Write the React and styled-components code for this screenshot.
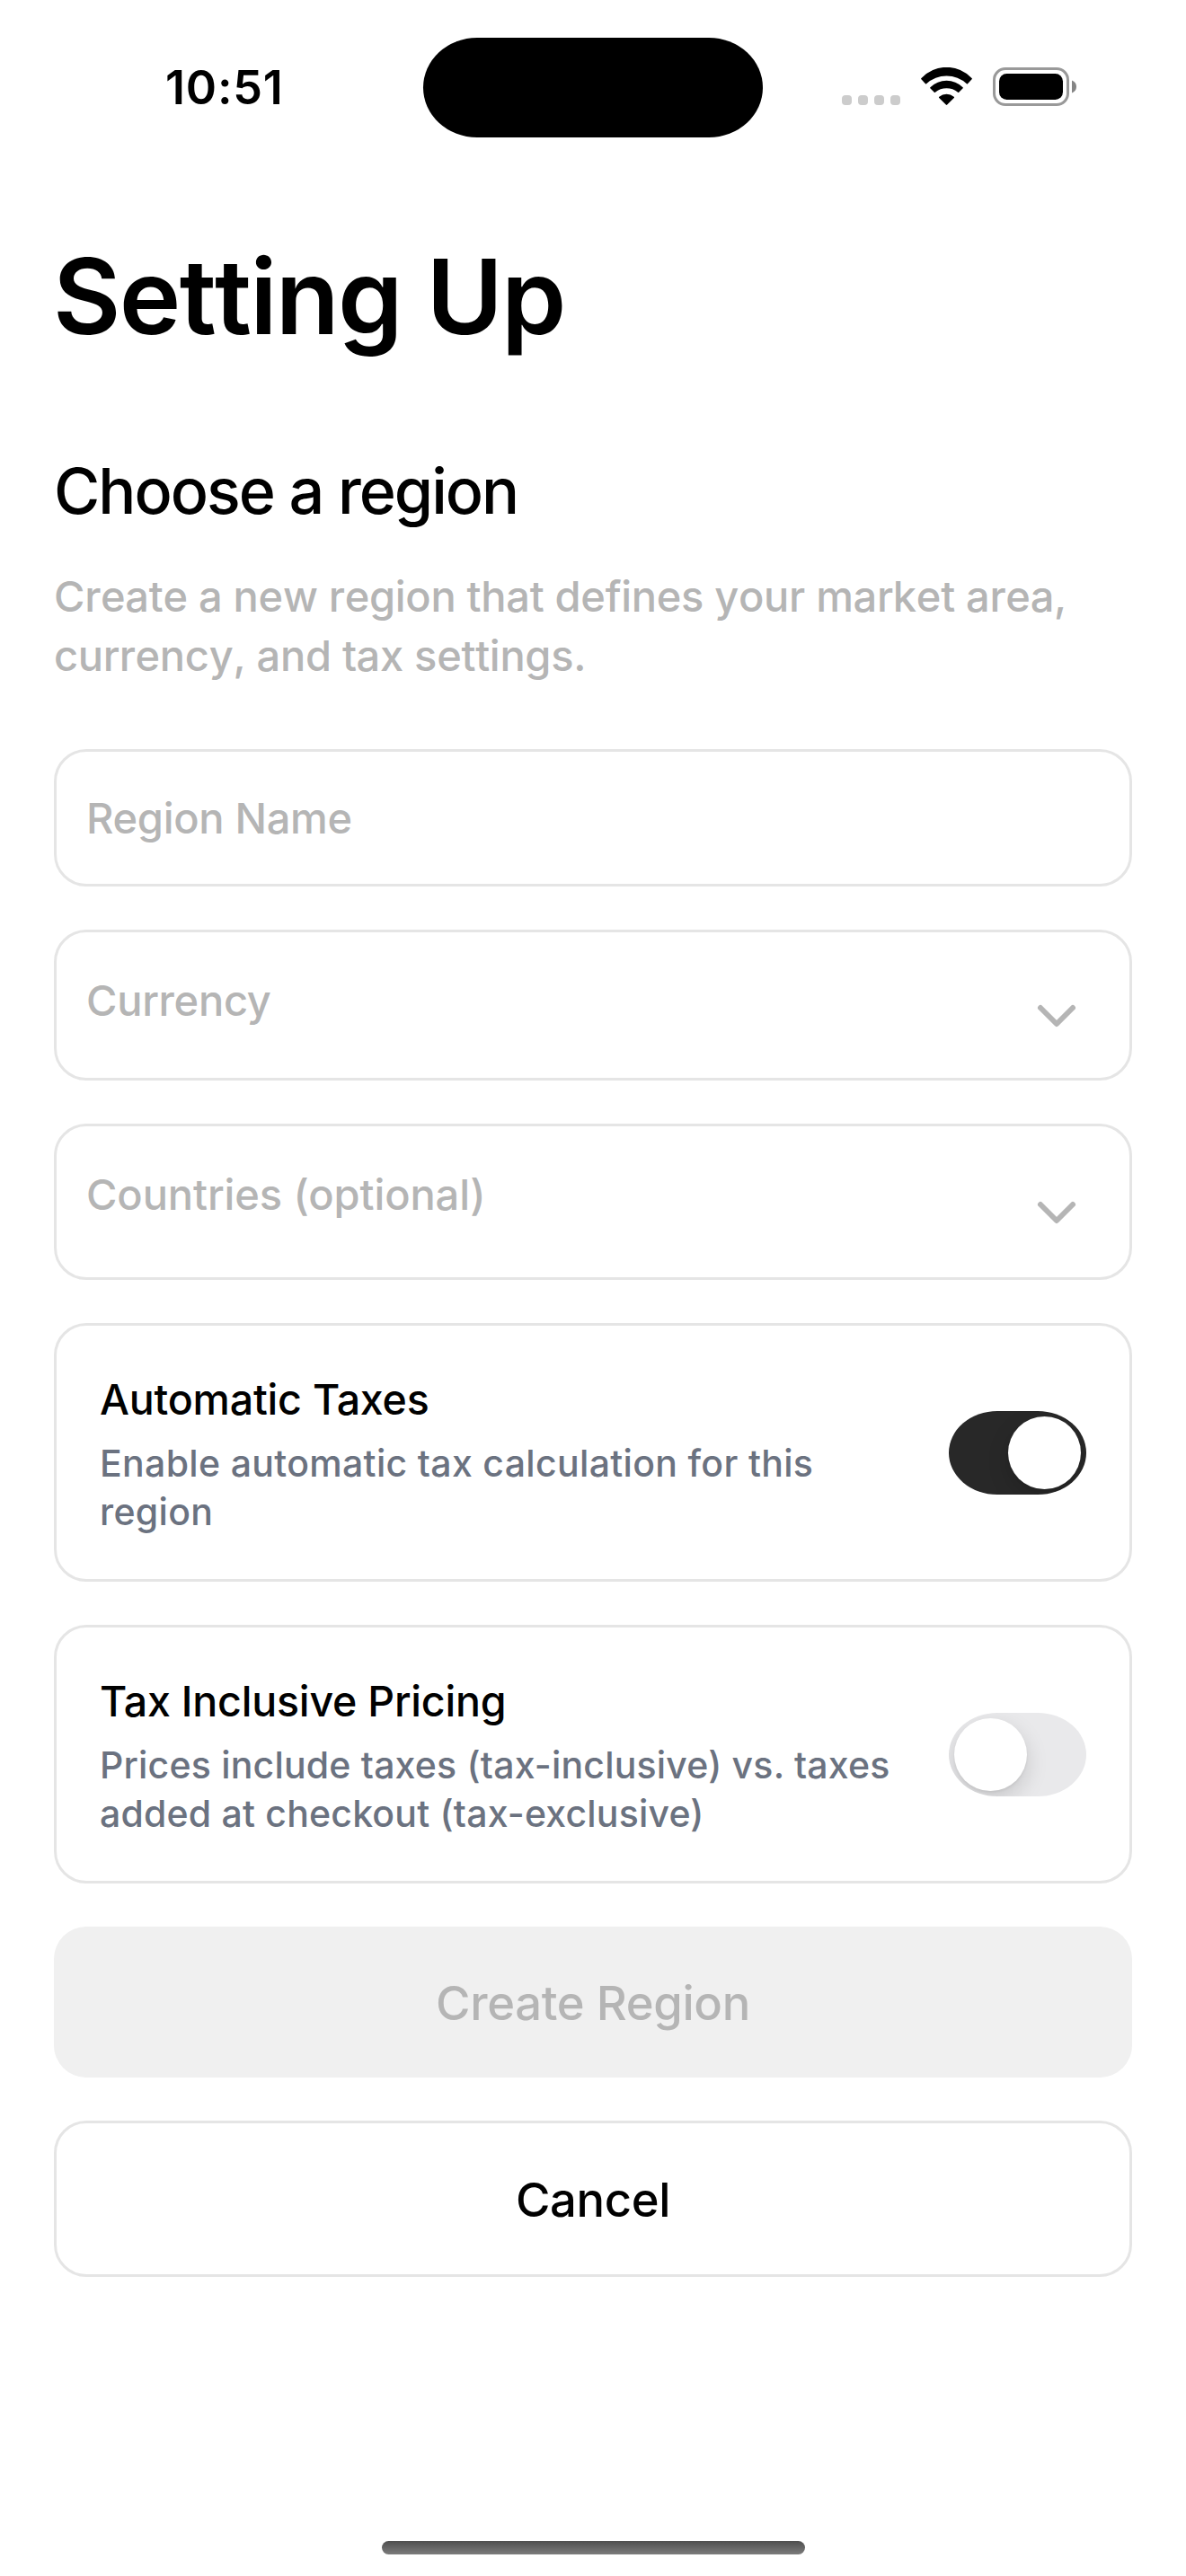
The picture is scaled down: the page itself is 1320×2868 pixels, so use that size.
import React, { useState } from "react";
import styled, { createGlobalStyle } from "styled-components";
import { ChevronDown } from "lucide-react";

const GlobalStyle = createGlobalStyle`
  *, *::before, *::after { box-sizing: border-box; }
  body {
    margin: 0;
    background: #fff;
    font-family: Inter, "Liberation Sans", sans-serif;
    font-weight: 500;
    color: #000;
  }
  h1, h2, p { margin: 0; }
`;

const muted = "#b5b5b5";
const line = "#e5e5e5";

const Screen = styled.div`
  width: 1320px;
  height: 2868px;
  display: flex;
  flex-direction: column;
  background: #fff;
  overflow: hidden;
`;

const StatusBar = styled.header`
  display: grid;
  grid-template-columns: 471px 378px 1fr;
  align-items: center;
  height: 194px;
  flex: none;
`;

const Clock = styled.time`
  padding-left: 184px;
  padding-top: 2px;
  font-size: 52px;
  line-height: 64px;
  font-weight: 600;
  letter-spacing: 0.8px;
`;

const Island = styled.div`
  height: 111px;
  border-radius: 60px / 55.5px;
  background: #000;
`;

const StatusIcons = styled.div`
  display: flex;
  align-items: flex-start;
  gap: 23px;
  padding-left: 88px;
  margin-bottom: 1px;
`;

const SignalDots = styled.div`
  display: flex;
  gap: 7px;
  margin-top: 31px;
`;

const Dot = styled.span`
  width: 11px;
  height: 11px;
  border-radius: 4px;
  background: #ccc;
`;

const Content = styled.main`
  display: flex;
  flex-direction: column;
  flex: 1;
  padding: 66px 60px 0;
`;

const Title = styled.h1`
  margin-left: -1px;
  font-size: 116px;
  line-height: 140px;
  font-weight: 600;
  font-kerning: none;
  letter-spacing: -1.7px;
`;

const Heading = styled.h2`
  margin-top: 105px;
  font-size: 70px;
  line-height: 84px;
  font-weight: 500;
  letter-spacing: -2px;
`;

const Lead = styled.p`
  margin-top: 42px;
  font-size: 47px;
  line-height: 66px;
  font-kerning: none;
  letter-spacing: -0.3px;
  color: ${muted};
`;

const Form = styled.div`
  display: flex;
  flex-direction: column;
  gap: 48px;
  margin-top: 71px;
`;

const Box = styled.div`
  display: flex;
  align-items: center;
  height: ${(p) => p.$height}px;
  border: 3px solid ${line};
  border-radius: 36px;
`;

const TextField = styled(Box)`
  padding: 0 33px;
`;

const Placeholder = styled.span`
  font-size: 47px;
  line-height: 66px;
  letter-spacing: ${(p) => p.$tracking ?? -0.3}px;
  color: ${muted};
`;

const SelectField = styled(Box)`
  justify-content: space-between;
  padding: 0 45px 0 33px;

  ${Placeholder} {
    align-self: flex-start;
    margin-top: 43px;
  }

  svg {
    margin-top: 24px;
    color: ${muted};
  }
`;

const ToggleCard = styled(Box)`
  gap: 36px;
  padding: 0 48px;
`;

const CardText = styled.div`
  flex: 1;
  display: flex;
  flex-direction: column;
  gap: 11px;
  padding-top: 1px;
`;

const CardTitle = styled.div`
  font-size: 46.5px;
  line-height: 66px;
  letter-spacing: -0.2px;
`;

const CardDescription = styled.p`
  font-size: 41px;
  line-height: 54px;
  letter-spacing: ${(p) => p.$tracking}px;
  color: #6b7280;
`;

const Track = styled.button`
  display: flex;
  align-items: center;
  justify-content: ${(p) => (p.$on ? "flex-end" : "flex-start")};
  flex: none;
  width: 153px;
  height: 93px;
  margin: 1px 0 0;
  padding: 0 6px;
  border: 0;
  border-radius: 54px / 46.5px;
  background: ${(p) => (p.$on ? "#282828" : "#e9e9eb")};
  overflow: hidden;
`;

const Knob = styled.span`
  width: 81px;
  height: 81px;
  border-radius: 50%;
  background: #fff;
  box-shadow: 0 9px 24px rgba(0, 0, 0, 0.15), 0 2px 3px rgba(0, 0, 0, 0.06);
`;

const Button = styled.button`
  height: ${(p) => (p.$filled ? 168 : 174)}px;
  padding: 1px 0 0;
  border: ${(p) => (p.$filled ? "0" : `3px solid ${line}`)};
  border-radius: 36px;
  background: ${(p) => (p.$filled ? "#f0f0f0" : "#fff")};
  color: ${(p) => (p.$filled ? muted : "#000")};
  font-family: inherit;
  font-size: 52.5px;
  font-weight: 500;
  line-height: 66px;
  letter-spacing: -0.35px;
`;

const HomeIndicator = styled.div`
  align-self: center;
  width: 471px;
  height: 15px;
  margin-bottom: 24px;
  border-radius: 8px;
  background: linear-gradient(#4e4e4e, #7c7c7c);
`;

const WifiIcon = () => (
  <svg width="57" height="42" viewBox="0 0 57 42" fill="#000">
    <path d="M0.4 13.2Q-0.2 12.7 0.5 12A38.3 38.3 0 0 1 56.5 12Q57.2 12.7 56.6 13.2L52 18.2Q51.5 18.7 50.9 18.2A33 33 0 0 0 6.1 18.2Q5.5 18.7 5 18.2Z" />
    <path d="M10.3 23.3Q9.8 22.7 10.4 22.2A26 26 0 0 1 46.6 22.2Q47.2 22.7 46.7 23.3L42.2 27.8Q41.7 28.2 41.1 27.8A20 20 0 0 0 15.9 27.8Q15.3 28.2 14.8 27.8Z" />
    <path d="M20.2 34Q19.6 33.3 20.3 32.7A12.5 12.5 0 0 1 36.7 32.7Q37.4 33.3 36.8 34L29.2 41.6Q28.5 42.2 27.8 41.6Z" />
  </svg>
);

const BatteryIcon = () => (
  <svg width="93" height="43" viewBox="0 0 93 43">
    <rect x="1.5" y="1.5" width="82" height="40" rx="12.5" fill="none" stroke="#999" strokeWidth="3" />
    <rect x="7" y="7" width="71" height="29" rx="8.5" fill="#000" />
    <path d="M88 14.5Q93 16.6 93 21.5Q93 26.4 88 28.5Z" fill="#858585" />
  </svg>
);

function ToggleRow({ title, description, tracking, initial }) {
  const [on, setOn] = useState(initial);
  return (
    <ToggleCard $height={288}>
      <CardText>
        <CardTitle>{title}</CardTitle>
        <CardDescription $tracking={tracking}>{description}</CardDescription>
      </CardText>
      <Track $on={on} role="switch" aria-checked={on} aria-label={title} onClick={() => setOn(!on)}>
        <Knob />
      </Track>
    </ToggleCard>
  );
}

export default function App() {
  return (
    <Screen>
      <GlobalStyle />
      <StatusBar>
        <Clock>10:51</Clock>
        <Island />
        <StatusIcons>
          <SignalDots>
            <Dot />
            <Dot />
            <Dot />
            <Dot />
          </SignalDots>
          <WifiIcon />
          <BatteryIcon />
        </StatusIcons>
      </StatusBar>
      <Content>
        <Title>Setting Up</Title>
        <Heading>Choose a region</Heading>
        <Lead>Create a new region that defines your market area, currency, and tax settings.</Lead>
        <Form>
          <TextField $height={153}>
            <Placeholder>Region Name</Placeholder>
          </TextField>
          <SelectField $height={168}>
            <Placeholder>Currency</Placeholder>
            <ChevronDown size={72} strokeWidth={2} />
          </SelectField>
          <SelectField $height={174}>
            <Placeholder $tracking={-0.1}>Countries (optional)</Placeholder>
            <ChevronDown size={72} strokeWidth={2} />
          </SelectField>
          <ToggleRow
            title="Automatic Taxes"
            description="Enable automatic tax calculation for this region"
            tracking={0.33}
            initial
          />
          <ToggleRow
            title="Tax Inclusive Pricing"
            description="Prices include taxes (tax-inclusive) vs. taxes added at checkout (tax-exclusive)"
            tracking={0.2}
            initial={false}
          />
          <Button $filled disabled>
            Create Region
          </Button>
          <Button>Cancel</Button>
        </Form>
      </Content>
      <HomeIndicator />
    </Screen>
  );
}
